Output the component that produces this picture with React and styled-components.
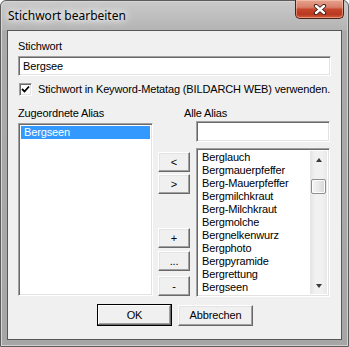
import React from 'react';
import styled, { createGlobalStyle, css } from 'styled-components';

const GlobalStyle = createGlobalStyle`
  html, body {
    margin: 0;
    padding: 0;
    background: #ffffff;
  }
  body {
    font: 11px/13px "Liberation Sans", Arial, sans-serif;
    letter-spacing: -0.15px;
    color: #000;
  }
`;

const sunken = css`
  box-sizing: border-box;
  border: 1px solid;
  border-color: #a0a0a0 #ffffff #ffffff #a0a0a0;
  box-shadow: inset 1px 1px 0 #696969, inset -1px -1px 0 #e3e3e3;
  background: #ffffff;
`;

const Window = styled.div`
  width: 349px;
  height: 347px;
  box-sizing: border-box;
  border: 1px solid #5c5c5c;
  border-radius: 6px 6px 0 0;
  background: linear-gradient(#cacaca, #b4b4b4 29px, #aaaaaa 30px, #a6a6a6);
  box-shadow: inset 1px 1px 0 #d6d6d6, inset -1px -1px 0 #d0d0d0;
  padding: 0 6px 6px;
  display: flex;
  flex-direction: column;
`;

const TitleBar = styled.div`
  height: 29px;
  margin: 0 -6px;
  padding: 0 4px 0 7px;
  display: flex;
  justify-content: space-between;
  align-items: flex-start;
`;

const Title = styled.span`
  margin-top: 7px;
  font: 12px/16px "Noto Sans", "Open Sans", sans-serif;
  letter-spacing: 0;
  color: #000;
  text-shadow: 0 0 6px #fff, 0 0 10px #fff, 0 0 14px #fff;
`;

const CloseButton = styled.div`
  width: 49px;
  height: 19px;
  margin-top: -1px;
  box-sizing: border-box;
  border: 1px solid #4e2018;
  border-top: none;
  border-radius: 0 0 5px 5px;
  background: linear-gradient(#e6a28f 0%, #d98069 40%, #c5462d 52%, #b9391f 80%, #d65f3e 100%);
  box-shadow: inset 0 0 0 1px rgba(255, 220, 200, 0.45);
  display: flex;
  align-items: center;
  justify-content: center;
`;

const Client = styled.div`
  flex: 1;
  border: 1px solid #575757;
  background: #f0f0f0;
  padding: 9px 10px 0;
  display: flex;
  flex-direction: column;
`;

const Label = styled.div`
  height: 13px;
  margin-left: ${(p) => p.$shift || 0}px;
  white-space: nowrap;
`;

const TextField = styled.div`
  ${sunken};
  height: ${(p) => p.$h || 20}px;
  margin-top: ${(p) => p.$top || 0}px;
  padding: 3px 4px 0;
  white-space: nowrap;
`;

const CheckRow = styled.div`
  display: flex;
  align-items: center;
  margin-top: 7px;
  margin-left: 1px;
  gap: 6px;
  white-space: nowrap;
`;

const CheckBox = styled.div`
  ${sunken};
  width: 13px;
  height: 13px;
  display: flex;
  align-items: center;
  justify-content: center;
`;

const Lower = styled.div`
  display: flex;
  margin-top: 11px;
`;

const LeftColumn = styled.div`
  width: 135px;
  display: flex;
  flex-direction: column;
`;

const MiddleColumn = styled.div`
  width: 32px;
  margin-left: 5px;
  padding-top: 45px;
  display: flex;
  flex-direction: column;
`;

const RightColumn = styled.div`
  width: 134px;
  margin-left: 6px;
  display: flex;
  flex-direction: column;
`;

const ListBox = styled.div`
  ${sunken};
  height: ${(p) => p.$h}px;
  margin-top: ${(p) => p.$top || 0}px;
  padding: 2px;
  display: flex;
  overflow: hidden;
`;

const Items = styled.div`
  flex: 1;
  overflow: hidden;
`;

const Item = styled.div`
  height: 13px;
  padding-left: 3px;
  white-space: nowrap;
  background: ${(p) => (p.$selected ? '#3399ff' : 'transparent')};
  color: ${(p) => (p.$selected ? '#ffffff' : '#000000')};
`;

const ScrollBar = styled.div`
  width: 17px;
  display: flex;
  flex-direction: column;
  background: linear-gradient(to right, #e4e4e4, #f1f1f1 30%, #f1f1f1 70%, #e8e8e8);
`;

const ArrowButton = styled.div`
  height: 17px;
  display: flex;
  align-items: center;
  justify-content: center;
`;

const Arrow = styled.div`
  width: 0;
  height: 0;
  border-left: 3.5px solid transparent;
  border-right: 3.5px solid transparent;
  ${(p) =>
    p.$down
      ? css`border-top: 4px solid #3a3a3a;`
      : css`border-bottom: 4px solid #3a3a3a;`}
`;

const Track = styled.div`
  flex: 1;
  padding-top: 11px;
  display: flex;
  justify-content: center;
`;

const Thumb = styled.div`
  width: 15px;
  height: 15px;
  box-sizing: border-box;
  border: 1px solid #8e8e8e;
  border-radius: 2px;
  background: linear-gradient(to right, #f6f6f6, #e8e8e8 50%, #d8d8d8);
  box-shadow: inset 0 0 0 1px #fcfcfc;
`;

const raised = css`
  box-sizing: border-box;
  border: 1px solid;
  border-color: #ffffff #696969 #696969 #ffffff;
  box-shadow: inset -1px -1px 0 #a0a0a0, inset 1px 1px 0 #e3e3e3;
  background: #f0f0f0;
  display: flex;
  align-items: center;
  justify-content: center;
  font: 11px/13px "Liberation Sans", Arial, sans-serif;
  color: #000;
`;

const SmallButton = styled.div`
  ${raised};
  height: 20px;
  margin-top: ${(p) => p.$top || 0}px;
`;

const Footer = styled.div`
  display: flex;
  justify-content: center;
  align-items: center;
  gap: 6px;
  margin-top: 7px;
  padding-left: 1px;
`;

const DialogButton = styled.div`
  ${raised};
  width: 75px;
  height: ${(p) => (p.$default ? 22 : 21)}px;
  ${(p) =>
    p.$default &&
    css`
      border-color: #000;
      box-shadow: inset -1px -1px 0 #696969, inset 1px 1px 0 #ffffff, inset -2px -2px 0 #a0a0a0;
    `}
`;

const allAlias = [
  'Berglauch',
  'Bergmauerpfeffer',
  'Berg-Mauerpfeffer',
  'Bergmilchkraut',
  'Berg-Milchkraut',
  'Bergmolche',
  'Bergnelkenwurz',
  'Bergphoto',
  'Bergpyramide',
  'Bergrettung',
  'Bergseen',
  'Bergsteiger',
];

function CloseGlyph() {
  return (
    <svg width="14" height="11" viewBox="0 0 14 11">
      <path d="M3 2 L11 9 M11 2 L3 9" stroke="#3a1a14" strokeWidth="4.2" strokeLinecap="round" />
      <path d="M3 2 L11 9 M11 2 L3 9" stroke="#ffffff" strokeWidth="2.4" strokeLinecap="round" />
    </svg>
  );
}

function CheckMark() {
  return (
    <svg width="9" height="9" viewBox="0 0 9 9">
      <path d="M1 4 L3.5 6.5 L8 1.5" fill="none" stroke="#000" strokeWidth="1.8" />
    </svg>
  );
}

export default function App() {
  return (
    <>
      <GlobalStyle />
      <Window>
        <TitleBar>
          <Title>Stichwort bearbeiten</Title>
          <CloseButton>
            <CloseGlyph />
          </CloseButton>
        </TitleBar>
        <Client>
          <Label>Stichwort</Label>
          <TextField $top={3}>Bergsee</TextField>
          <CheckRow>
            <CheckBox>
              <CheckMark />
            </CheckBox>
            <span>Stichwort in Keyword-Metatag (BILDARCH WEB) verwenden.</span>
          </CheckRow>
          <Lower>
            <LeftColumn>
              <Label>Zugeordnete Alias</Label>
              <ListBox $h={173} $top={3}>
                <Items>
                  <Item $selected>Bergseen</Item>
                </Items>
              </ListBox>
            </LeftColumn>
            <MiddleColumn>
              <SmallButton>&lt;</SmallButton>
              <SmallButton $top={2}>&gt;</SmallButton>
              <SmallButton $top={34}>+</SmallButton>
              <SmallButton $top={3}>...</SmallButton>
              <SmallButton $top={5}>-</SmallButton>
            </MiddleColumn>
            <RightColumn>
              <Label $shift={-12}>Alle Alias</Label>
              <TextField $h={21} $top={1} />
              <ListBox $h={149} $top={6}>
                <Items>
                  {allAlias.map((name) => (
                    <Item key={name}>{name}</Item>
                  ))}
                </Items>
                <ScrollBar>
                  <ArrowButton>
                    <Arrow />
                  </ArrowButton>
                  <Track>
                    <Thumb />
                  </Track>
                  <ArrowButton>
                    <Arrow $down />
                  </ArrowButton>
                </ScrollBar>
              </ListBox>
            </RightColumn>
          </Lower>
          <Footer>
            <DialogButton $default>OK</DialogButton>
            <DialogButton>Abbrechen</DialogButton>
          </Footer>
        </Client>
      </Window>
    </>
  );
}
